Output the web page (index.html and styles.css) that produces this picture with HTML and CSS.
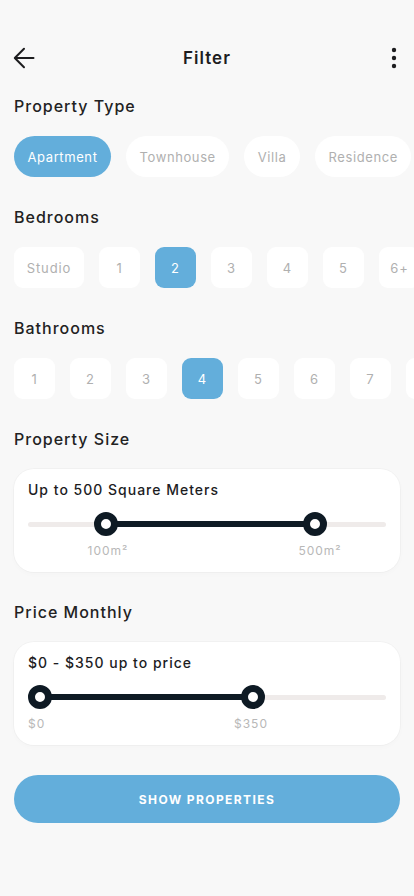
FILE: index.html
```html
<!DOCTYPE html>
<html lang="en">
<head>
<meta charset="utf-8">
<meta name="viewport" content="width=device-width, initial-scale=1">
<title>Filter</title>
<link rel="stylesheet" href="styles.css">
</head>
<body>
<div class="screen">
  <header class="topbar">
    <button class="icon-btn" aria-label="Back">
      <svg width="22" height="22" viewBox="0 0 22 22" fill="none" stroke="#1d1d1f" stroke-width="2" stroke-linecap="round" stroke-linejoin="round"><path d="M20.5 11H2M11 1.8L1.8 11L11 20.2"/></svg>
    </button>
    <h1 class="title">Filter</h1>
    <button class="icon-btn kebab" aria-label="More">
      <svg width="6" height="22" viewBox="0 0 6 22" fill="#1d1d1f"><circle cx="3" cy="3" r="2.2"/><circle cx="3" cy="11" r="2.2"/><circle cx="3" cy="19" r="2.2"/></svg>
    </button>
  </header>

  <section class="section">
    <h2 class="heading">Property Type</h2>
    <div class="row">
      <span class="chip active">Apartment</span>
      <span class="chip">Townhouse</span>
      <span class="chip">Villa</span>
      <span class="chip">Residence</span>
    </div>
  </section>

  <section class="section">
    <h2 class="heading">Bedrooms</h2>
    <div class="row">
      <span class="box wide">Studio</span>
      <span class="box">1</span>
      <span class="box active">2</span>
      <span class="box">3</span>
      <span class="box">4</span>
      <span class="box">5</span>
      <span class="box">6+</span>
    </div>
  </section>

  <section class="section">
    <h2 class="heading">Bathrooms</h2>
    <div class="row">
      <span class="box">1</span>
      <span class="box">2</span>
      <span class="box">3</span>
      <span class="box active">4</span>
      <span class="box">5</span>
      <span class="box">6</span>
      <span class="box">7</span>
      <span class="box">8</span>
    </div>
  </section>

  <section class="section">
    <h2 class="heading">Property Size</h2>
    <div class="card">
      <p class="card-title">Up to 500 Square Meters</p>
      <div class="slider">
        <div class="track"></div>
        <div class="fill" style="left:78px; width:209px"></div>
        <span class="thumb" style="left:78px"></span>
        <span class="thumb" style="left:287px"></span>
      </div>
      <div class="labels">
        <span class="label" style="left:80px">100m²</span>
        <span class="label" style="left:292px">500m²</span>
      </div>
    </div>
  </section>

  <section class="section">
    <h2 class="heading">Price Monthly</h2>
    <div class="card">
      <p class="card-title">$0 - $350 up to price</p>
      <div class="slider">
        <div class="track"></div>
        <div class="fill" style="left:12px; width:213px"></div>
        <span class="thumb" style="left:12px"></span>
        <span class="thumb" style="left:225px"></span>
      </div>
      <div class="labels">
        <span class="label start">$0</span>
        <span class="label" style="left:223px">$350</span>
      </div>
    </div>
  </section>

  <button class="cta">SHOW PROPERTIES</button>
</div>
</body>
</html>
```

FILE: styles.css
```css
* { box-sizing: border-box; }

html, body {
  margin: 0;
  padding: 0;
  background: #f8f8f8;
}

body {
  font-family: Inter, "Noto Sans", "Liberation Sans", sans-serif;
  color: #1d1d1f;
  width: 414px;
  height: 896px;
  overflow: hidden;
}

.screen {
  padding: 36px 14px 0 14px;
  display: flex;
  flex-direction: column;
}

.topbar {
  height: 44px;
  display: flex;
  align-items: center;
  justify-content: space-between;
  position: relative;
}

.icon-btn {
  background: none;
  border: 0;
  padding: 0;
  margin: 0;
  display: flex;
  align-items: center;
  justify-content: center;
  width: 24px;
  height: 24px;
  margin-left: -2px;
}

.icon-btn.kebab {
  margin-left: 0;
  margin-right: -1px;
  width: 14px;
}

.title {
  margin: 0;
  font-size: 17px;
  font-weight: 600;
  letter-spacing: 1px;
  position: absolute;
  left: 50%;
  transform: translateX(-50%);
  top: 12px;
  line-height: 20px;
}

.section {
  margin-top: 16px;
}

.section + .section {
  margin-top: 30px;
}

.heading {
  margin: 0 0 20px 0;
  font-size: 16px;
  line-height: 20px;
  font-weight: 500;
  letter-spacing: 1px;
  color: #222;
}

.row {
  display: flex;
  gap: 15px;
  flex-wrap: nowrap;
  margin-right: -14px;
  overflow: hidden;
}

.chip {
  flex: none;
  height: 41px;
  padding: 0 13.5px;
  border-radius: 21px;
  background: #fff;
  color: #b0b0b0;
  font-size: 13px;
  letter-spacing: 0.6px;
  display: flex;
  align-items: center;
  justify-content: center;
}

.chip.active,
.box.active {
  background: #63aedb;
  color: #fff;
}

.box {
  flex: none;
  width: 41px;
  height: 41px;
  border-radius: 9px;
  background: #fff;
  color: #b0b0b0;
  font-size: 13px;
  letter-spacing: 0.9px;
  display: flex;
  align-items: center;
  justify-content: center;
}

.box.wide {
  width: 70px;
}

.card {
  margin-top: 2px;
  background: #fff;
  border-radius: 20px;
  padding: 12px 14px 13px 14px;
  box-shadow: 0 0 0 1px rgba(0,0,0,0.025), 0 2px 6px rgba(0,0,0,0.02);
}

.card-title {
  margin: 0;
  font-size: 14px;
  line-height: 18px;
  font-weight: 500;
  letter-spacing: 1px;
  color: #1d1d1f;
}

.slider {
  position: relative;
  height: 24px;
  margin-top: 13px;
}

.track {
  position: absolute;
  left: 0;
  right: 0;
  top: 9.5px;
  height: 5px;
  border-radius: 3px;
  background: #efebea;
}

.fill {
  position: absolute;
  top: 9px;
  height: 6px;
  background: #0e1a24;
}

.thumb {
  position: absolute;
  top: 0;
  width: 24px;
  height: 24px;
  margin-left: -12px;
  border-radius: 50%;
  background: #fff;
  border: 7.5px solid #0e1a24;
}

.labels {
  position: relative;
  height: 16px;
  margin-top: 7px;
}

.label {
  position: absolute;
  top: 0;
  font-size: 12px;
  line-height: 16px;
  letter-spacing: 1px;
  color: #b8b8b8;
  transform: translateX(-50%);
  white-space: nowrap;
}

.label.start {
  left: 0;
  transform: none;
}

.cta {
  margin-top: 30px;
  height: 48px;
  border: 0;
  border-radius: 24px;
  background: #63aedb;
  color: #fff;
  font-family: Inter, "Noto Sans", "Liberation Sans", sans-serif;
  font-size: 12px;
  font-weight: 700;
  letter-spacing: 1.4px;
}
```
